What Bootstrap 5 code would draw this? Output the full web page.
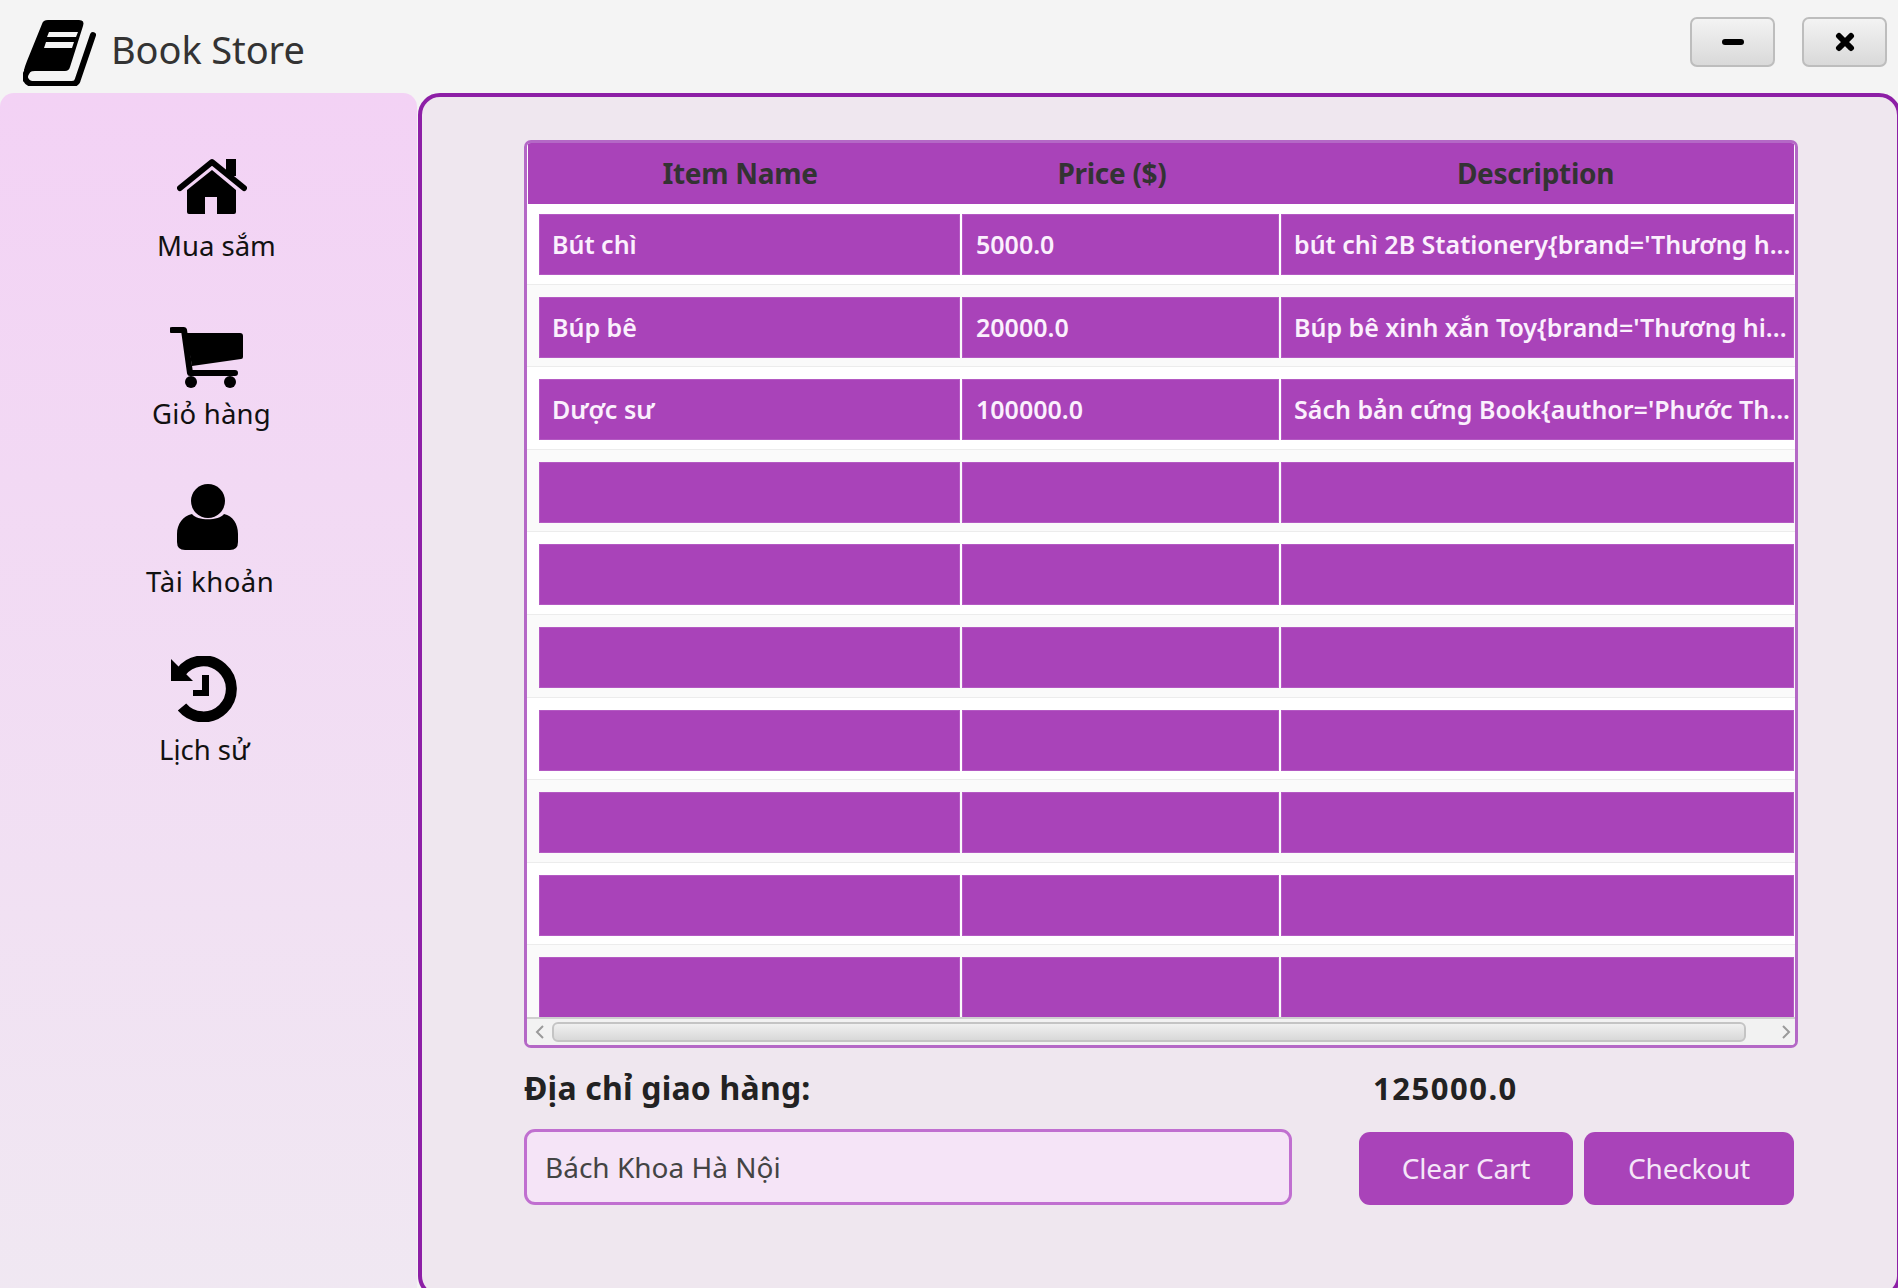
<!DOCTYPE html>
<html lang="en">
<head>
  <meta charset="UTF-8">
  <meta name="viewport" content="width=device-width, initial-scale=1">
  <title>Book Store</title>
  <link href="https://cdn.jsdelivr.net/npm/bootstrap@5.3.0/dist/css/bootstrap.min.css" rel="stylesheet">
  <style>
    body {
      background-color: #f4f4f4;
      font-family: "Noto Sans", "Open Sans", sans-serif;
      color: #222;
      height: 1288px;
      overflow: hidden;
    }
    .top-bar {
      height: 93px;
      padding-left: 23px;
      padding-right: 11px;
    }
    .book-logo { margin-top: 13px; }
    .app-title {
      font-size: 38px;
      color: #333;
      margin-left: 15px;
      margin-top: 6px;
      letter-spacing: -0.1px;
    }
    .win-gap { gap: 27px; }
    .win-btn {
      width: 85px;
      height: 50px;
      padding: 0;
      border: 2px solid #bdbdbd;
      border-radius: 7px;
      background: linear-gradient(#f3f3f3, #d9d9d9);
      margin-top: -10px;
    }
    .app-body {
      height: 1205px;
    }
    .side-menu {
      width: 417px;
      flex: none;
      padding-top: 65px;
      border-radius: 14px 14px 0 0;
      background: linear-gradient(#f3d2f5, #f0e8f2);
    }
    .side-item {
      width: max-content;
      font-size: 27.5px;
      line-height: 36px;
      color: #111;
    }
    .side-item svg { display: block; }
    .it-shop { margin-left: 157px; }
    .it-shop svg { margin-left: 20px; margin-bottom: 14px; }
    .it-cart { margin-left: 152px; margin-top: 63px; letter-spacing: 0.2px; }
    .it-cart svg { margin-left: 18px; margin-bottom: 8px; }
    .it-acct { margin-left: 146px; margin-top: 52px; letter-spacing: 0.5px; }
    .it-acct svg { margin-left: 31px; margin-bottom: 14px; }
    .it-hist { margin-left: 159px; margin-top: 56px; }
    .it-hist svg { margin-left: 11px; margin-bottom: 10px; }
    .main-pane {
      width: 1483px;
      flex: none;
      margin-left: 1px;
      height: 1205px;
      padding: 43px 99px 0 102px;
      background-color: #efe7ef;
      border: 4px solid #8d1fa6;
      border-radius: 22px;
    }
    .cart-box {
      height: 908px;
      background-color: #fff;
      border: 3px solid #b468c6;
      border-radius: 7px;
      overflow: hidden;
    }
    .cart-head {
      height: 61px;
      margin: 0 1px;
      flex: none;
      background-color: #a943b9;
      color: #333;
      font-size: 28px;
      font-weight: 700;
    }
    .cart-head > div { text-align: center; line-height: 60px; letter-spacing: -0.3px; flex: none; }
    .hc-1 { width: 424px; }
    .hc-2 { width: 320px; }
    .hc-3 { width: 527px; }
    .cart-rows { height: 813px; flex: none; overflow: hidden; }
    .cart-row {
      height: 82.6px;
      padding: 12px 0 0 12px;
      border-bottom: 1px solid #ececec;
    }
    .cart-row:first-child { height: 80.6px; padding-top: 10px; }
    .cart-row:nth-child(even) { background-color: #fafafa; }
    .cart-cell {
      height: 61px;
      flex: none;
      background-color: #a943b9;
      box-shadow: inset 0 0 0 1px #b45ac3;
      color: #fbf0fd;
      font-size: 25px;
      font-weight: 600;
      line-height: 60px;
      padding-left: 13px;
      white-space: nowrap;
      overflow: hidden;
    }
    .cc-1 { width: 421px; }
    .cc-2 { width: 317px; margin-left: 2px; padding-left: 14px; }
    .cc-3 { width: 513px; margin-left: 2px; }
    .scroll-bar {
      background-color: #f2f2f2;
      border-top: 2px solid #cfcfcf;
      padding: 3px 0;
    }
    .scroll-thumb {
      background: linear-gradient(#f0f0f0, #d8d8d8);
      border: 2px solid #c4c4c4;
      border-radius: 6px;
    }
    .scroll-arrow { width: 25px; flex: none; }
    .order-row { margin-top: 20px; }
    .addr-col { width: 768px; flex: none; }
    .addr-label, .total-label {
      font-size: 32px;
      font-weight: 700;
      line-height: 40px;
      letter-spacing: 0.2px;
      color: #222;
      margin-bottom: 21px;
    }
    .total-label { padding-left: 14px; font-size: 31px; letter-spacing: 1.5px; }
    .addr-input {
      height: 76px;
      padding: 0 18px;
      font-size: 28px;
      color: #444;
      background-color: #f5e4f7;
      border: 3px solid #c06fd0;
      border-radius: 11px;
    }
    .order-side { margin-left: 67px; }
    .act-gap { gap: 11px; }
    .act-btn {
      height: 73px;
      margin-top: 3px;
      font-size: 28px;
      color: #f5e6f8;
      background-color: #a943b9;
      border: 0;
      border-radius: 11px;
      letter-spacing: -0.2px;
      padding: 0 0 2px;
    }
    .act-clear { width: 214px; }
    .act-check { width: 210px; }
  </style>
</head>
<body class="m-0">

  <div class="top-bar d-flex align-items-center">
    <svg width="73" height="66" viewBox="0 0 73 66" class="book-logo">
      <path d="M19 4Q20 0 25 0H56Q62 0 60 6L47 47Q46 51 42 51H12Q6 51 3 55L1 50Q2 46 4 41Z" fill="#000"/>
      <path d="M6 49Q0 56 3 60Q5 64 11 64H49Q54 64 55 59L70 15" fill="none" stroke="#000" stroke-width="6" stroke-linecap="round"/>
      <path d="M26 12H55L53 17H24ZM23 22H51L49 28H21Z" fill="#f4f4f4"/>
    </svg>
    <span class="app-title">Book Store</span>
    <div class="ms-auto d-flex win-gap">
      <button class="btn win-btn d-flex align-items-center justify-content-center">
        <svg width="22" height="8" viewBox="0 0 22 8"><path d="M3 4H19" stroke="#000" stroke-width="6" stroke-linecap="round"/></svg>
      </button>
      <button class="btn win-btn d-flex align-items-center justify-content-center">
        <svg width="20" height="20" viewBox="0 0 20 20"><path d="M4 4L16 16M16 4L4 16" stroke="#000" stroke-width="6" stroke-linecap="round"/></svg>
      </button>
    </div>
  </div>

  <div class="app-body d-flex">
    <div class="side-menu">
      <div class="side-item it-shop">
        <svg width="70" height="56" viewBox="0 0 70 56">
          <path d="M49 1H59V18H49Z" fill="#000"/>
          <path d="M3 30L35 4L67 30" fill="none" stroke="#000" stroke-width="6" stroke-linecap="round" stroke-linejoin="round"/>
          <path d="M35 12L59 32V54Q59 56 57 56H40V39H28V56H12Q10 56 10 54V32Z" fill="#000"/>
        </svg>
        Mua sắm
      </div>
      <div class="side-item it-cart">
        <svg width="73" height="61" viewBox="0 0 73 61">
          <path d="M2 3H14L20 46H65" fill="none" stroke="#000" stroke-width="6" stroke-linecap="round" stroke-linejoin="round"/>
          <path d="M16 6H70Q73 6 73 9V30Q73 32 71 32L22 39Z" fill="#000"/>
          <circle cx="21" cy="55" r="6"/><circle cx="60" cy="55" r="6"/>
        </svg>
        Giỏ hàng
      </div>
      <div class="side-item it-acct">
        <svg width="61" height="66" viewBox="0 0 61 66">
          <circle cx="31" cy="17" r="17"/>
          <path d="M15 30C20 37 42 37 47 30C56 32 61 40 61 50V58Q61 66 53 66H8Q0 66 0 58V50C0 40 6 32 15 30Z" fill="#000"/>
        </svg>
        Tài khoản
      </div>
      <div class="side-item it-hist">
        <svg width="68" height="66" viewBox="0 0 68 66">
          <path d="M11 16A28 28 0 1 1 12 51" fill="none" stroke="#000" stroke-width="11"/>
          <path d="M1 3V25H23Z" fill="#000"/>
          <path d="M32 19H39V40H23V34H32Z" fill="#000"/>
        </svg>
        Lịch sử
      </div>
    </div>

    <div class="main-pane">
      <div class="cart-box d-flex flex-column">
        <div class="cart-head d-flex">
          <div class="hc-1">Item Name</div>
          <div class="hc-2">Price ($)</div>
          <div class="hc-3">Description</div>
        </div>
        <div class="cart-rows" id="cartRows"></div>
        <div class="scroll-bar d-flex flex-grow-1">
          <div class="scroll-arrow d-flex align-items-center justify-content-center">
            <svg width="10" height="16" viewBox="0 0 10 16"><path d="M8 2L2 8L8 14" fill="none" stroke="#9a9a9a" stroke-width="2"/></svg>
          </div>
          <div class="scroll-thumb flex-grow-1"></div>
          <div class="scroll-arrow d-flex align-items-center justify-content-end pe-1 ms-4">
            <svg width="10" height="16" viewBox="0 0 10 16"><path d="M2 2L8 8L2 14" fill="none" stroke="#9a9a9a" stroke-width="2"/></svg>
          </div>
        </div>
      </div>
      <div class="order-row d-flex">
        <div class="addr-col">
          <div class="addr-label">Địa chỉ giao hàng:</div>
          <input type="text" class="form-control addr-input" value="Bách Khoa Hà Nội">
        </div>
        <div class="order-side">
          <div class="total-label">125000.0</div>
          <div class="d-flex act-gap">
            <button class="btn act-btn act-clear">Clear Cart</button>
            <button class="btn act-btn act-check">Checkout</button>
          </div>
        </div>
      </div>
    </div>
  </div>

  <script>
    const items = [
      ['Bút chì', '5000.0', "bút chì 2B Stationery{brand='Thương h..."],
      ['Búp bê', '20000.0', "Búp bê xinh xắn Toy{brand='Thương hi..."],
      ['Dược sư', '100000.0', "Sách bản cứng Book{author='Phước Th..."]
    ];
    let html = '';
    for (let i = 0; i < 10; i++) {
      const it = items[i] || ['', '', ''];
      html += `<div class="cart-row d-flex">
        <div class="cart-cell cc-1">${it[0]}</div>
        <div class="cart-cell cc-2">${it[1]}</div>
        <div class="cart-cell cc-3">${it[2]}</div>
      </div>`;
    }
    document.getElementById('cartRows').innerHTML = html;
  </script>

</body>
</html>
